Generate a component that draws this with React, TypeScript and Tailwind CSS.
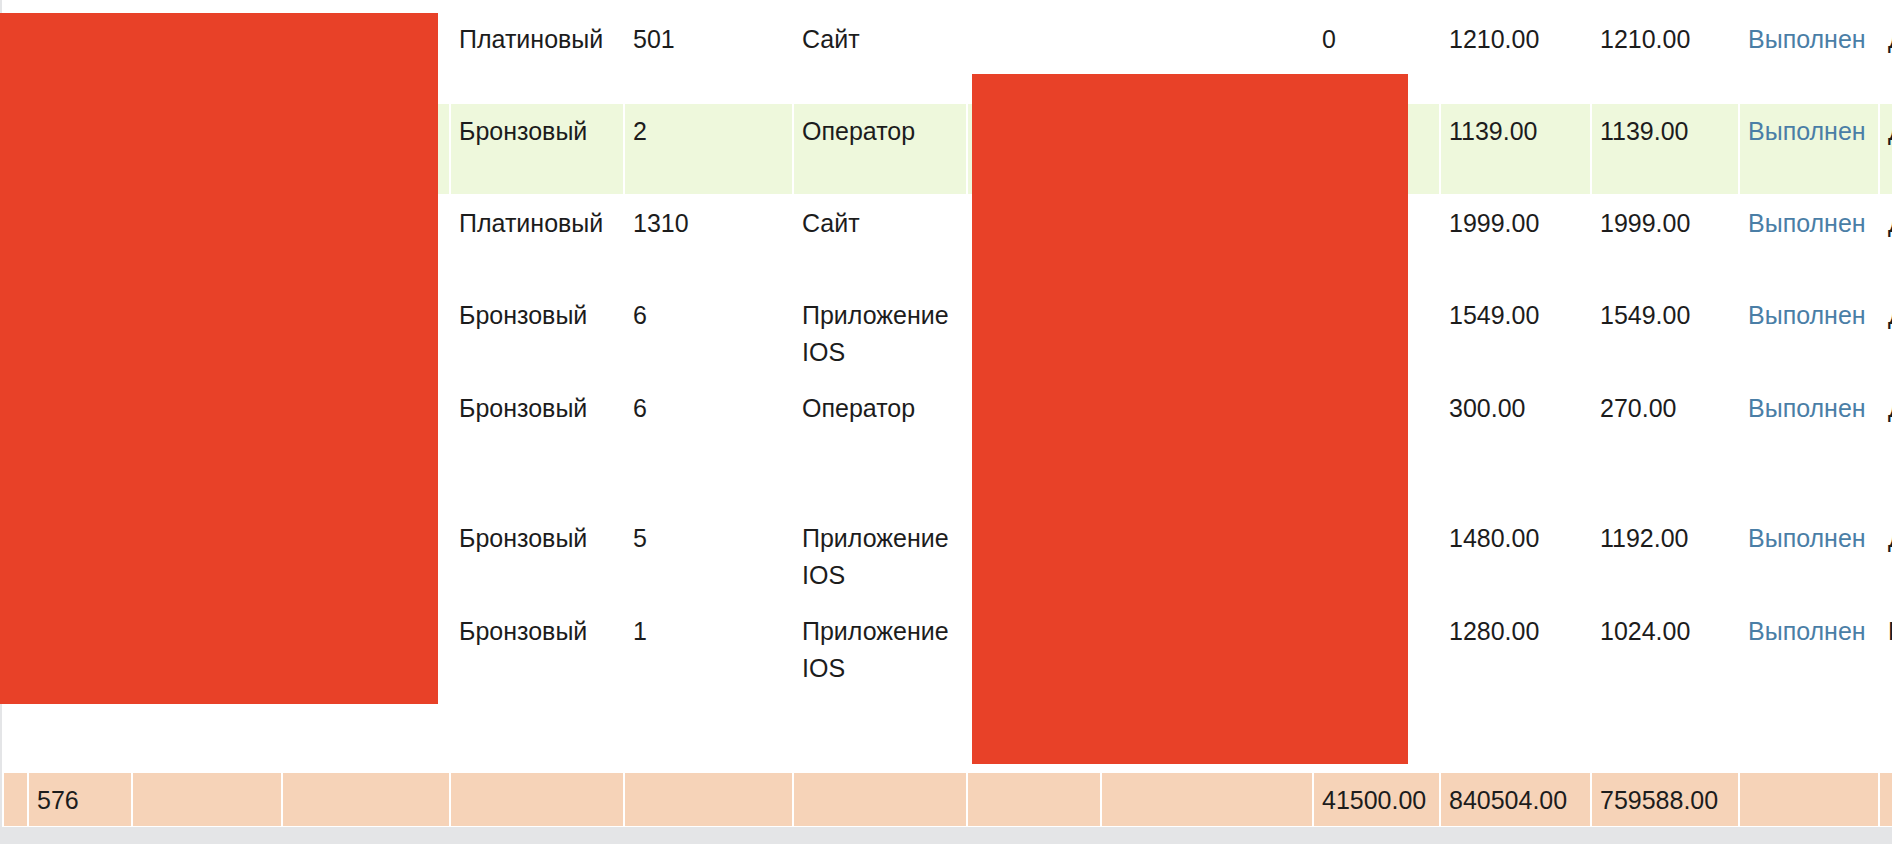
import React from "react";

type Row = {
  bg: string;
  level: string;
  num: string;
  source: string;
  c9: string;
  c10: string;
  c11: string;
  status: string;
  last: string;
};

const rows: Row[] = [
  { bg: "bg-white", level: "Платиновый", num: "501", source: "Сайт", c9: "0", c10: "1210.00", c11: "1210.00", status: "Выполнен", last: "Доставка" },
  { bg: "bg-[#eef8dc]", level: "Бронзовый", num: "2", source: "Оператор", c9: "", c10: "1139.00", c11: "1139.00", status: "Выполнен", last: "Доставка" },
  { bg: "bg-white", level: "Платиновый", num: "1310", source: "Сайт", c9: "", c10: "1999.00", c11: "1999.00", status: "Выполнен", last: "Доставка" },
  { bg: "bg-white", level: "Бронзовый", num: "6", source: "Приложение IOS", c9: "", c10: "1549.00", c11: "1549.00", status: "Выполнен", last: "Доставка" },
  { bg: "bg-white", level: "Бронзовый", num: "6", source: "Оператор", c9: "", c10: "300.00", c11: "270.00", status: "Выполнен", last: "Доставка" },
  { bg: "bg-white", level: "Бронзовый", num: "5", source: "Приложение IOS", c9: "", c10: "1480.00", c11: "1192.00", status: "Выполнен", last: "Доставка" },
  { bg: "bg-white", level: "Бронзовый", num: "1", source: "Приложение IOS", c9: "", c10: "1280.00", c11: "1024.00", status: "Выполнен", last: "Пункт выдачи" },
];

function Cell({ bg, children, link }: { bg: string; children?: React.ReactNode; link?: boolean }) {
  return (
    <div className={`${bg} pt-[9px] px-[8px] overflow-hidden ${link ? "text-[#4a7ea6]" : ""}`}>
      {children}
    </div>
  );
}

export default function App() {
  return (
    <div className="relative w-[1892px] h-[844px] overflow-hidden bg-[#e4e5e7] font-['Liberation_Sans',Arial,sans-serif] text-[25px] leading-[37px] text-[#1c1c1c]">
      <div className="ml-[2px] w-max bg-white pt-[12px] pl-[2px] pr-[2px] pb-[1px]">
        <div className="grid gap-[2px] grid-cols-[23px_102px_148px_166px_172px_167px_172px_132px_210px_125px_149px_146px_138px_160px] grid-rows-[90px_90px_90px_91px_128px_91px_167px_53px]">
          {rows.map((r, i) => (
            <React.Fragment key={i}>
              <Cell bg={r.bg} />
              <Cell bg={r.bg} />
              <Cell bg={r.bg} />
              <Cell bg={r.bg} />
              <Cell bg={r.bg}>{r.level}</Cell>
              <Cell bg={r.bg}>{r.num}</Cell>
              <Cell bg={r.bg}>{r.source}</Cell>
              <Cell bg={r.bg} />
              <Cell bg={r.bg} />
              <Cell bg={r.bg}>{r.c9}</Cell>
              <Cell bg={r.bg}>{r.c10}</Cell>
              <Cell bg={r.bg}>{r.c11}</Cell>
              <Cell bg={r.bg} link>
                {r.status}
              </Cell>
              <Cell bg={r.bg}>
                <span className="whitespace-nowrap">{r.last}</span>
              </Cell>
            </React.Fragment>
          ))}
          <Cell bg="bg-[#f6d3b8]" />
          <Cell bg="bg-[#f6d3b8]">576</Cell>
          <Cell bg="bg-[#f6d3b8]" />
          <Cell bg="bg-[#f6d3b8]" />
          <Cell bg="bg-[#f6d3b8]" />
          <Cell bg="bg-[#f6d3b8]" />
          <Cell bg="bg-[#f6d3b8]" />
          <Cell bg="bg-[#f6d3b8]" />
          <Cell bg="bg-[#f6d3b8]" />
          <Cell bg="bg-[#f6d3b8]">41500.00</Cell>
          <Cell bg="bg-[#f6d3b8]">840504.00</Cell>
          <Cell bg="bg-[#f6d3b8]">759588.00</Cell>
          <Cell bg="bg-[#f6d3b8]" />
          <Cell bg="bg-[#f6d3b8]" />
        </div>
      </div>
      <div className="absolute left-0 top-[13px] w-[438px] h-[691px] bg-[#e84128]" />
      <div className="absolute left-[972px] top-[74px] w-[436px] h-[690px] bg-[#e84128]" />
    </div>
  );
}
